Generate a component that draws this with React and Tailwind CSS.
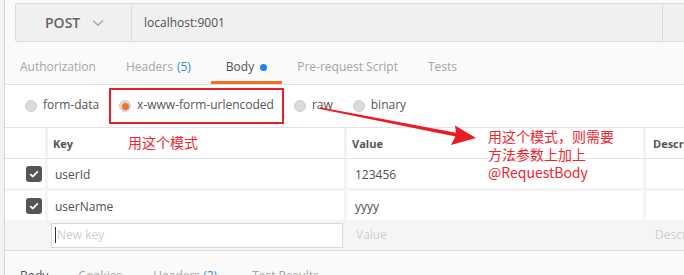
import React from "react";

const tabs = [
  { label: "Authorization" },
  { label: "Headers", count: "(5)" },
  { label: "Body", active: true },
  { label: "Pre-request Script" },
  { label: "Tests" },
];

const bodyModes = [
  { label: "form-data" },
  { label: "x-www-form-urlencoded", selected: true },
  { label: "raw" },
  { label: "binary" },
];

const rows = [
  { key: "userId", value: "123456" },
  { key: "userName", value: "yyyy" },
];

function Radio({ selected }) {
  return (
    <span className="w-[12px] h-[12px] rounded-full bg-[#dadada] border border-[#cfcfcf] flex items-center justify-center">
      {selected && <span className="w-[7px] h-[7px] rounded-full bg-[#f47023]" />}
    </span>
  );
}

function Check() {
  return (
    <span className="w-[16px] h-[16px] rounded-[3px] bg-[#555555] flex items-center justify-center">
      <svg width="10" height="8" viewBox="0 0 10 8">
        <path d="M1.2 4.2 L3.8 6.6 L8.8 1.4" fill="none" stroke="#fff" strokeWidth="1.8" />
      </svg>
    </span>
  );
}

export default function App() {
  return (
    <div
      className="w-[684px] h-[275px] overflow-hidden flex bg-[#fafafa]"
      style={{ fontFamily: "'Open Sans', 'Noto Sans', sans-serif" }}
    >
      {/* sidebar edge */}
      <div className="w-[5px] shrink-0 bg-[#f3f3f3] border-r border-[#d6d6d6]" />

      <div className="relative flex-1 flex flex-col">
        {/* url bar */}
        <div className="shrink-0 mt-[3px] ml-[10px] h-[39px] flex border border-[#dcdcdc] bg-[#f0f0f0] rounded-l-[2px]">
          <div className="w-[116px] shrink-0 flex items-center pl-[29px] border-r border-[#dcdcdc]">
            <span className="text-[14px] font-semibold text-[#666]">POST</span>
            <svg className="ml-[12px]" width="12" height="8" viewBox="0 0 12 8">
              <path d="M1 1.5 L6 6.2 L11 1.5" fill="none" stroke="#a8a8a8" strokeWidth="1.4" />
            </svg>
          </div>
          <div className="w-[531px] shrink-0 flex items-center pl-[12px] text-[12px] text-[#505050] border-r border-[#dcdcdc]">
            localhost:9001
          </div>
          <div className="flex-1" />
        </div>

        {/* request tabs */}
        <div className="shrink-0 h-[43px] flex border-b border-[#e2e2e2] text-[12px]">
          {tabs.map((t) => (
            <div
              key={t.label}
              className={`h-full flex items-center px-[15px] pt-[11px] border-b-[3px] ${
                t.active ? "ml-[5px] border-[#f47023] text-[#505050]" : "border-transparent text-[#a5a5a5]"
              }`}
            >
              {t.label}
              {t.count && <span className="ml-[4px] text-[#2a8ce6]">{t.count}</span>}
              {t.active && <span className="ml-[6px] w-[7px] h-[7px] rounded-full bg-[#1b85f0]" />}
            </div>
          ))}
        </div>

        {/* body modes */}
        <div className="shrink-0 h-[43px] flex items-center pl-[10px] border-b border-[#e2e2e2] bg-white text-[12px] text-[#555]">
          {bodyModes.map((m) => (
            <div
              key={m.label}
              className={`h-[36px] flex items-center gap-[6px] px-[8px] border-2 ${
                m.selected ? "border-[#e8202a]" : "border-transparent"
              }`}
            >
              <Radio selected={m.selected} />
              <span className="-mt-[2px]">{m.label}</span>
            </div>
          ))}
        </div>

        {/* params table */}
        <div className="shrink-0 grid grid-cols-[40px_296px_296px_1fr] gap-x-[3px] bg-[#f3f3f3] border-b border-[#e4e4e4]">
          <div className="h-[30px] bg-white" />
          <div className="h-[30px] bg-white flex items-center pt-[3px] pl-[5px] text-[11px] font-bold text-[#555]">Key</div>
          <div className="h-[30px] bg-white flex items-center pt-[3px] pl-[5px] text-[11px] font-bold text-[#555]">Value</div>
          <div className="h-[30px] bg-white flex items-center pt-[3px] pl-[7px] text-[11px] font-bold text-[#555] whitespace-nowrap overflow-hidden">
            Description
          </div>
        </div>
        <div className="shrink-0 grid grid-cols-[40px_296px_296px_1fr] gap-x-[3px] gap-y-[3px] bg-[#f4f4f4] text-[12px] text-[#505050]">
          {rows.map((r) => (
            <React.Fragment key={r.key}>
              <div className="h-[29px] bg-white flex items-center justify-end pr-[3px]">
                <Check />
              </div>
              <div className="h-[29px] bg-white flex items-center pt-[3px] pl-[7px]">{r.key}</div>
              <div className="h-[29px] bg-white flex items-center pt-[3px] pl-[8px]">{r.value}</div>
              <div className="h-[29px] bg-white" />
            </React.Fragment>
          ))}
        </div>
        <div className="shrink-0 h-[31px] flex items-center bg-[#f5f5f5] border-b border-[#dcdcdc] text-[12px] text-[#cfcfcf]">
          <div className="ml-[46px] w-[292px] h-[25px] flex items-center bg-white border border-[#d8d8d8]">
            <span className="w-px h-[16px] bg-[#333] ml-[3px]" />
            <span className="ml-[1px]">New key</span>
          </div>
          <span className="ml-[13px] w-[296px]">Value</span>
          <span className="ml-[3px] whitespace-nowrap">Description</span>
        </div>

        {/* response tabs */}
        <div className="shrink-0 flex pt-[16px] pl-[15px] text-[12px] text-[#a5a5a5] whitespace-nowrap">
          <span className="text-[#505050]">Body</span>
          <span className="ml-[30px]">Cookies</span>
          <span className="ml-[31px]">
            Headers <span className="text-[#2a8ce6]">(2)</span>
          </span>
          <span className="ml-[35px]">Test Results</span>
        </div>

        {/* annotations */}
        <div
          className="absolute left-[123px] top-[133px] text-[14px] leading-[18px] text-[#f0262e]"
          style={{ fontFamily: "'Noto Sans CJK SC', sans-serif" }}
        >
          用这个模式
        </div>
        <div
          className="absolute left-[483px] top-[127px] text-[14px] leading-[18px] text-[#f0262e]"
          style={{ fontFamily: "'Noto Sans CJK SC', sans-serif" }}
        >
          <div>用这个模式，则需要</div>
          <div>方法参数上加上</div>
          <div>@RequestBody</div>
        </div>
        <svg className="absolute left-0 top-0 pointer-events-none" width="679" height="275" viewBox="5 0 679 275">
          <polygon
            points="320,107.2 456,132.8 455,125.5 476,138 451,145 455.4,136.4 320,108.9"
            fill="#ec1c24"
          />
        </svg>
      </div>
    </div>
  );
}
